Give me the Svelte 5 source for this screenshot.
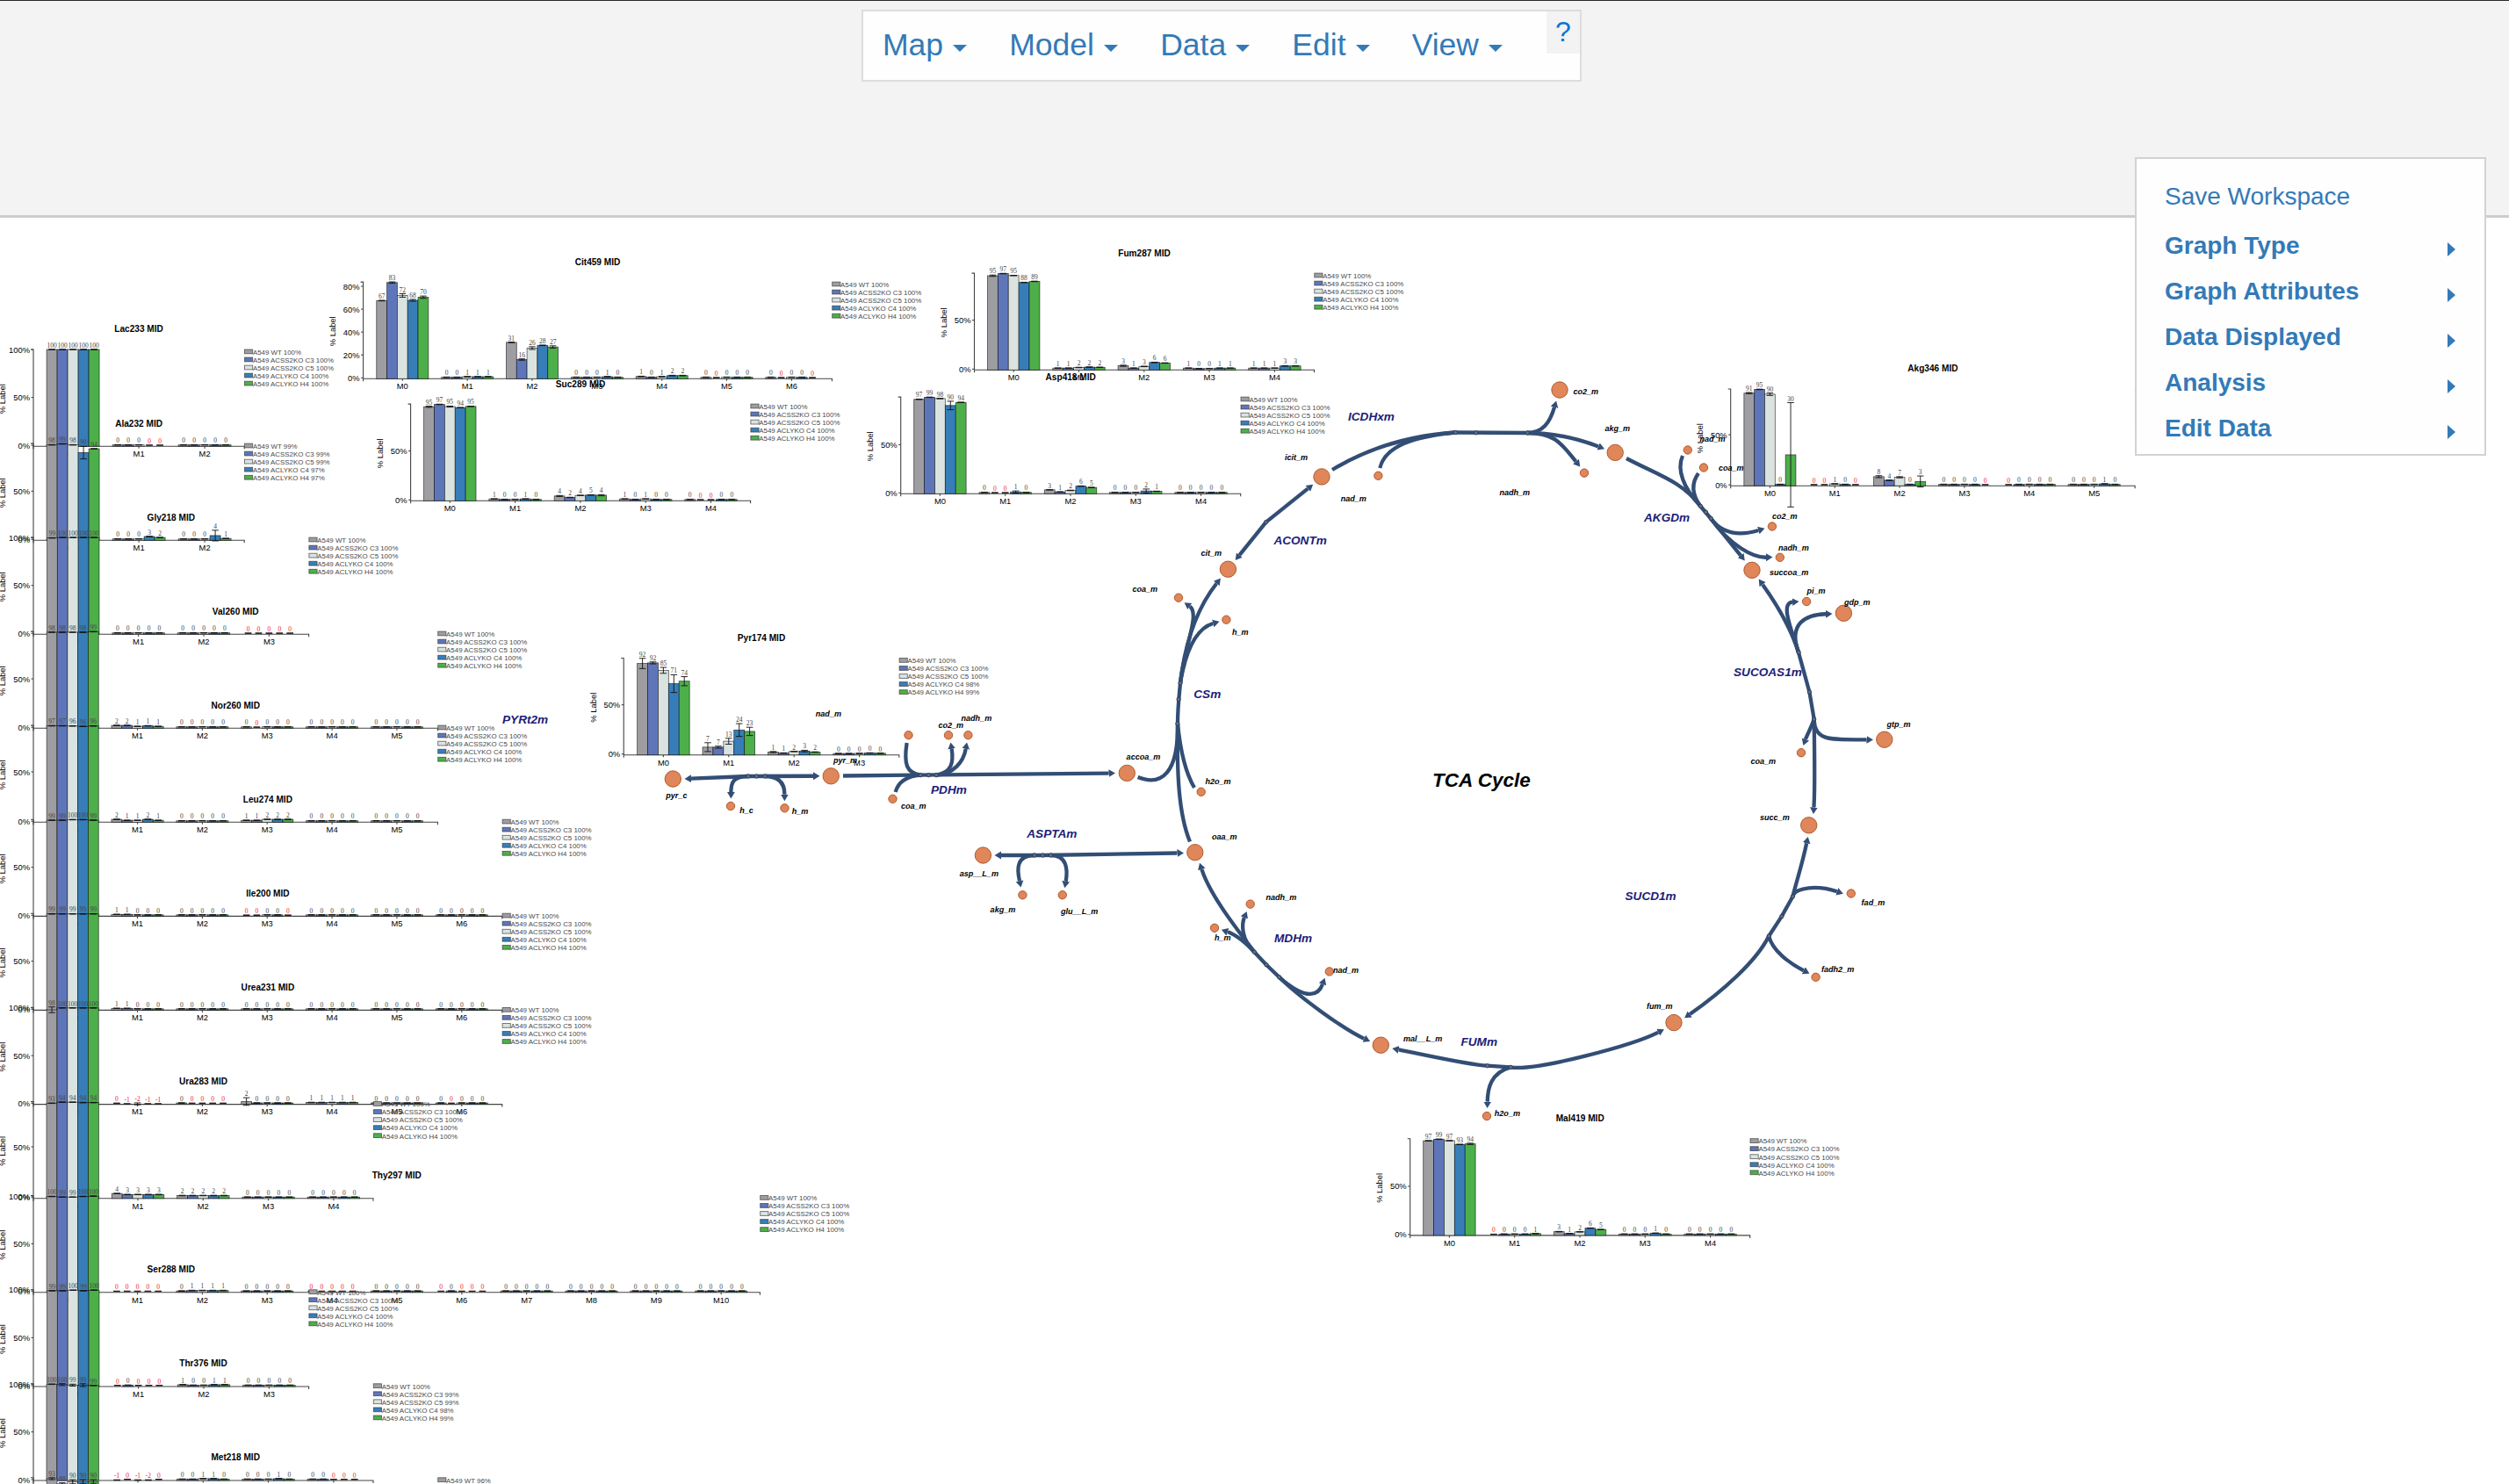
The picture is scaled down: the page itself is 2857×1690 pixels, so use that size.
<script>
  const menus = ['Map', 'Model', 'Data', 'Edit', 'View'];
  const panelItems = ['Graph Type', 'Graph Attributes', 'Data Displayed', 'Analysis', 'Edit Data'];

  const colors = ['#9e9da2', '#5e76b9', '#dae3e0', '#377eb8', '#4daf4a'];
  const samples = ['A549 WT', 'A549 ACSS2KO C3', 'A549 ACSS2KO C5', 'A549 ACLYKO C4', 'A549 ACLYKO H4'];
  const Z = '0 0 0 0 0';
  const R = '0r 0r 0r 0r 0r';
  const full = [100, 100, 100, 100, 100];

  // Group values: "value^error", a trailing r marks a corrected (red) value.
  const source = [
    ['Lac233', 38, 508.2, 100, ['100 100 100 100 100', '0 0 0 0r 0r', Z], full],
    ['Ala232', 38, 615.3, 99.4, ['98 99 98 90^6.5 94', '0 0 0 3 2', '0 0 0 4^5.5 1'], [99, 99, 99, 97, 97]],
    ['Gly218', 38, 722.3, 100, ['99.5 100 100 100 100', Z, Z, R], full],
    ['Val260', 38, 829.3, 98.8, ['98 98 98 98 98.6', '2 2 1 1.6 1', Z, '0 0r 0 0 0', Z, Z], full],
    ['Nor260', 38, 936.3, 97, ['96.6 96.6 96.4 96 96.4', '2 1 1 2 1', Z, '1 1 2 2 2', Z, Z], full],
    ['Leu274', 38, 1043.4, 99.8, ['99 99 99.6 99.6 99', '1 1 0 0 0', Z, '0r 0r 0 0 0r', Z, Z, Z], full],
    ['Ile200', 38, 1150.4, 99.5, ['99 99 99 99 99', '1 1 0 0 0', Z, Z, Z, Z, Z], full],
    ['Urea231', 38, 1257.6, 100.4, ['98^3 100 100 100 100', '0r -1r -2r^1 -1r -1r', '0 0r 0r 0r 0r', '2^4 0 0 0 0', '1 1 1 1 1', Z, '0 0r 0 0 0'], full],
    ['Ura283', 38, 1364.8, 94.5, ['93 94 94 93.6 93.6', '4 3 3 3 3', '2 2 2 2 2', Z, Z], full],
    ['Thy297', 38, 1471.7, 100.6, ['99.6 99 99 99.6 100', R, '0 1 1 1 1', Z, R, Z, '0r 0 0r 0r 0r', Z, Z, Z, Z], full],
    ['Ser288', 38, 1579, 100, ['99 99 99.6 99 99.6', '0r 0 0r 0r 0r', '1 0 0 1 1', Z], full],
    ['Thr376', 38, 1686, 100.5, ['100 99.6^1 99^1 99^1.5 98.6', '-1r 0r -1r -2r 0r', '0 0 1 1 0', '0 0 0 1 0', '0 0 0r 0r 0r'], [100, 99, 99, 98, 99]],
    ['Met218', 38, 1793, 94, ['93^1 88^1 90^2 90^2 90^2', Z, Z, Z, Z, Z], [96, 96, 96, 96, 96]],
    ['Cit459', 413.6, 431.3, 83.8, ['67.5 83.3^.6 72^1.5 67.8^.8 70.5^1', '0 0 1 1 1', '31 16^.6 26^1.2 28.4 27^1', '0 0 0 1 0', '1.2 0 1 2 2', '0 0r 0 0 0', '0 0r 0 0 0r'], full],
    ['Suc289', 467.6, 570.3, 98, ['95.2^.6 97.6 95.4^.5 94.3 95.6', '1 0 0 1 0', '4^.5 2.5 4.6 5 4.8^.6', '1 0 1 0 0', '0 0r 0r 0 0'], full],
    ['Fum287', 1109.5, 421.3, 98, ['95.4^.7 97.6 95.6 88.5 89.6', '1 1 1.6 2 1.8', '3.4^.6 1 2.7 6.8 6.2', '1 0 0 1 1', '1 1 1 3.2 3.2'], full],
    ['Asp418', 1025.7, 562.3, 99.6, ['97.2 99.3 98 90.8^4.4 94', '0 0r 0r 1^1 0', '3.2 1 2.6 7 5.6', '0 0 0 2^2 1.6', Z], full],
    ['Akg346', 1970.7, 553.2, 95.6, ['91.5^.6 95.2 90.4^1.2 0 30^52', '0r 0r 1 0 0r', '8.2^1 4.6 7.6^.6 0 3.4^5.5', '0 0 0 0 0r', '0r 0 0 0 0', '0 0 0 1 0'], full],
    ['Pyr174', 710.2, 859.7, 97.4, ['92^5.2 92.6^1 85^3 71.5^9 74^4.6', '7^4.5 7^1 13^3 24.4^6.5 23^4.2', '2^.6 1 2.6 3^.8 2', '0 0 .6 1 .8'], [100, 100, 100, 98, 99]],
    ['Mal419', 1605.7, 1406.9, 99.4, ['97.2 98.8 97.3 93.4 94^.7', '0r 0 0 0 1', '3 1 2.8 6.6 5.2', '0 0 0 1.4 0', Z], full]
  ];
  // Labels that the rounding of the plotted heights would not give.
  const labelOf = { '99.5': 99, '98.6': 99, '96.6': 97, '96.4': 96, '99.6': 100, '93.6': 94, '1.6': 1, '1.8': 2, '1.2': 1, '1.4': 1, '.6': 0, '.8': 0 };
  const overrides = {
    Cit459: ['67 83 72 68 70', null, '31 16 26 28 27', null, null],
    Suc289: ['95 97 95 94 95', null, '4 2 4 5 4'],
    Fum287: ['95 97 95 88 89', '1 1 2 2 2', '3 1 3 6 6', null, '1 1 1 3 3'],
    Asp418: ['97 99 98 90 94', null, '3 1 2 6 5', '0 0 0 2 1'],
    Akg346: ['91 95 90 0 30', null, '8 4 7 0 3'],
    Pyr174: ['92 92 85 71 74', '7 7 13 24 23', '1 1 2 3 2', '0 0 0 0 0'],
    Mal419: ['97 99 97 93 94', null, '3 1 2 6 5'],
    Thr376: ['100 100 99 99 99'],
    Ser288: ['99 99 100 99 100']
  };

  const H = 109.2;
  const charts = source.map(([name, x, base, max, groups, pct]) => {
    const n = groups.length;
    const w = 20 + 73.4 * n;
    const pitch = n === 3 ? 75 : n === 4 ? 74.4 : n === 5 ? 74.3 : 73.85;
    const c0 = x + (n > 4 ? 44.7 : (w - (n - 1) * pitch) / 2);
    const bw = (pitch * 0.8) / 5;
    const y = (v) => base - 1 - (H * v) / max;
    const ticks = [];
    const step = max < 85 ? 20 : 50;
    for (let t = 0; t <= max + 0.01; t += step) ticks.push({ t, y: y(t) });
    const gs = groups.map((g, gi) => {
      const cx = c0 + gi * pitch;
      const over = overrides[name]?.[gi]?.split(' ');
      const bars = g.split(' ').map((s, i) => {
        const red = s.includes('r');
        const [a, e] = s.replace('r', '').split('^');
        const v = parseFloat(a);
        const pv = v === 0 ? (red ? 0.2 : 0.5) : Math.max(v, -0.4);
        const err = e ? parseFloat(e) : 0.25;
        const bx = cx + (i - 2.5) * bw;
        return {
          x: bx, mid: bx + bw / 2, top: y(pv), h: Math.max(0, base - y(pv)), red,
          e1: y(pv + err), e2: y(pv - err), stem: !!e, color: colors[i],
          label: over ? over[i] : labelOf[a] ?? v
        };
      });
      return { cx, bars, label: 'M' + gi };
    });
    return { name, x, base, top: base - 110.2, w, bw, ticks, gs, pct };
  });

  // Flux edges: cubic or straight segments; b switches the arrowhead on.
  const E = (p, b = 1) => ({ p, b });
  const edges = [
    E([1657, 492.5, 1605, 496, 1560, 509, 1517, 535], 0),
    E([1657, 492.5, 1610, 497, 1577, 508, 1571.3, 533], 0),
    E([1657, 492.5, 1740, 493], 0),
    E([1739, 493, 1770, 493, 1798, 500, 1826.6, 511]),
    E([1739, 493, 1757, 493, 1765, 481, 1772, 457]),
    E([1739, 493, 1772, 493, 1779, 507, 1799, 531]),
    E([1441.6, 594.6, 1494.8, 552]),
    E([1441.6, 594.6, 1407, 637.5]),
    E([1344, 778, 1349, 735, 1362, 694, 1389.6, 659]),
    E([1344, 778, 1348, 738, 1367, 699, 1349, 686.5]),
    E([1344, 778, 1350, 742, 1361, 716, 1388, 708]),
    E([1344, 778, 1343, 790, 1341, 805, 1341, 824], 0),
    E([1341, 824, 1340, 880, 1342, 927, 1355, 958.5], 0),
    E([1341, 824, 1344, 855, 1350, 880, 1360, 897], 0),
    E([1341, 824, 1342, 880, 1323, 896, 1295.6, 885], 0),
    E([1936, 576, 1915, 548, 1888, 541, 1852, 522], 0),
    E([1936, 576, 1917, 556, 1909, 535, 1916, 519], 0),
    E([1936, 576, 1926, 562, 1926, 550, 1934, 539], 0),
    E([1936, 576, 1948.5, 591], 0),
    E([1948.5, 591, 1986.5, 638]),
    E([1948.5, 591, 1964, 611, 1986, 609, 2009, 602]),
    E([1948.5, 591, 1970, 621, 1996, 635, 2018, 634.6]),
    E([2048, 743, 2040, 718, 2026, 692, 2003, 660]),
    E([2048, 743, 2042, 722, 2026, 687, 2048, 685]),
    E([2048, 743, 2036, 710, 2056, 700, 2086, 699]),
    E([2048, 743, 2060.4, 788], 0),
    E([2060.4, 788, 2065.7, 819], 0),
    E([2065.7, 819, 2062, 830, 2058, 836, 2053.6, 848.6]),
    E([2065.7, 819, 2066, 845, 2086, 842, 2132.5, 842.5]),
    E([2065.7, 819, 2066, 850, 2067, 895, 2065, 926.4]),
    E([2041.4, 1021, 2045, 1006, 2052, 985, 2058.6, 953.4]),
    E([2041.4, 1021, 2044, 1010, 2070, 1008, 2098.4, 1017.5]),
    E([2041.4, 1021, 2028.8, 1043.6], 0),
    E([2028.8, 1043.6, 2014.2, 1066], 0),
    E([2014.2, 1066, 2000, 1095, 1960, 1130, 1918.5, 1159]),
    E([2014.2, 1066, 2018, 1082, 2036, 1096, 2060, 1108.5]),
    E([1720, 1215.4, 1750, 1220, 1860, 1190, 1894.5, 1172.4]),
    E([1720, 1215.4, 1693.6, 1213.7], 0),
    E([1693.6, 1213.7, 1675, 1213, 1635, 1204, 1585.8, 1194]),
    E([1720, 1215.4, 1697, 1222, 1694, 1240, 1693.6, 1261.6]),
    E([1428.4, 1084.2, 1410, 1060, 1378, 1020, 1366.2, 983.3]),
    E([1428.4, 1084.2, 1413, 1070, 1414, 1052, 1419.5, 1038.4]),
    E([1428.4, 1084.2, 1415, 1070, 1406, 1064, 1391.3, 1059]),
    E([1428.4, 1084.2, 1442, 1098.7], 0),
    E([1442, 1098.7, 1456.6, 1112.8], 0),
    E([1456.6, 1112.8, 1490, 1142, 1502, 1132, 1508.4, 1114.2]),
    E([1456.6, 1112.8, 1480, 1136, 1530, 1172, 1559.7, 1185.8]),
    E([852, 884, 780, 887]),
    E([852, 884, 933, 883.7]),
    E([852, 884, 836, 884, 832.4, 890, 832.4, 909]),
    E([871, 884, 888, 884, 893.4, 893, 893.4, 911.7]),
    E([960, 883.5, 1269.5, 880.5]),
    E([1048, 882.7, 1032, 880, 1029, 870, 1032.6, 846], 0),
    E([1048, 882.7, 1033, 884, 1023, 890, 1019.7, 902], 0),
    E([1066, 882.7, 1084, 880, 1086, 868, 1082.6, 846]),
    E([1066, 882.7, 1086, 881, 1097, 868, 1101, 846]),
    E([1187, 974, 1133, 974]),
    E([1187, 974, 1347.5, 971.4]),
    E([1178, 974, 1157, 974, 1158, 990, 1162.5, 1010]),
    E([1196.5, 974, 1215, 974, 1216, 990, 1212.5, 1010.7])
  ].map(({ p, b }) => {
    // Pull the end back so the arrowhead's tip lands on the given point.
    const q = [...p];
    if (b) {
      const k = q.length;
      const dx = q[k - 2] - q[k - 4];
      const dy = q[k - 1] - q[k - 3];
      const l = Math.hypot(dx, dy);
      q[k - 2] -= (dx / l) * 7;
      q[k - 1] -= (dy / l) * 7;
    }
    const [x, y, ...rest] = q;
    return { d: `M${x} ${y}${rest.length === 2 ? 'L' : 'C'}${rest.join(' ')}`, arrow: b };
  });

  // [x, y, primary, label, label x, label baseline]
  const nodes = [
    [1776, 444, 1, 'co2_m', 1791.5, 448.6], [1839.2, 515.4, 1, 'akg_m', 1827.5, 491],
    [1505, 542.9, 1, 'icit_m', 1463, 524], [1569.4, 541.8, 0, 'nad_m', 1526.7, 571],
    [1804, 538.6, 0, 'nadh_m', 1707.4, 564], [1398.4, 648.2, 1, 'cit_m', 1367.5, 633],
    [1342, 680.7, 0, 'coa_m', 1289.5, 674], [1396.4, 705.7, 0, 'h_m', 1403, 722.5],
    [1367.7, 901.8, 0, 'h2o_m', 1372.5, 893], [1360.8, 970.7, 1, 'oaa_m', 1380, 956],
    [1921.8, 512.5, 0, 'nad_m', 1935.5, 503], [1940, 532.5, 0, 'coa_m', 1957, 535.5],
    [2017.9, 599.5, 0, 'co2_m', 2018, 591], [2026.8, 634.8, 0, 'nadh_m', 2025, 627],
    [1995, 649.3, 1, 'succoa_m', 2015, 655], [2057.1, 685, 0, 'pi_m', 2057.5, 676],
    [2099.4, 698.3, 1, 'gdp_m', 2100, 689], [2145.8, 842.2, 1, 'gtp_m', 2148.5, 828],
    [2051, 857.2, 0, 'coa_m', 1993.5, 870], [2059.7, 939.8, 1, 'succ_m', 2004, 934],
    [2107.8, 1017.5, 0, 'fad_m', 2119.6, 1031], [2067.6, 1112.8, 0, 'fadh2_m', 2074, 1107],
    [1906, 1164.6, 1, 'fum_m', 1875, 1149], [1572.3, 1190.2, 1, 'mal__L_m', 1598, 1186],
    [1693, 1271, 0, 'h2o_m', 1701.8, 1271], [1423.7, 1029.6, 0, 'nadh_m', 1441.5, 1025],
    [1383, 1056.8, 0, 'h_m', 1383, 1071], [1513.8, 1106.4, 0, 'nad_m', 1518, 1108],
    [766.3, 887, 1, 'pyr_c', 758.3, 909], [946.2, 883.8, 1, 'pyr_m', 949, 869],
    [832, 918, 0, 'h_c', 842.3, 926], [893.5, 920.3, 0, 'h_m', 901.7, 927],
    [1034.5, 837.2, 0, 'nad_m', 928.8, 816], [1080, 837.2, 0, 'co2_m', 1068.4, 829],
    [1102.4, 837.2, 0, 'nadh_m', 1094.5, 821], [1016.5, 909.8, 0, 'coa_m', 1026, 921],
    [1283.3, 880.4, 1, 'accoa_m', 1282.6, 864.6], [1119.4, 974, 1, 'asp__L_m', 1092.7, 998],
    [1164.4, 1019.3, 0, 'akg_m', 1127.6, 1039], [1209.8, 1019.2, 0, 'glu__L_m', 1208, 1041]
  ];
  const joints = [
    [1657.4, 492.5], [1680.8, 492.9], [1739.3, 493], [1441.6, 594.6], [1344, 778], [1342.1, 796.4],
    [1340.9, 824], [1936.4, 576.4], [1942.5, 583.2], [1948.3, 590.4], [2048.2, 742.9], [2060.4, 788],
    [2065.7, 819], [2041.4, 1021], [2028.8, 1043.6], [2014.2, 1066], [1428.4, 1084.2], [1442, 1098.7],
    [1456.6, 1112.8], [1693.6, 1213.7], [1720.2, 1215.4], [852.1, 884], [861.4, 884], [871, 884],
    [1048.2, 882.7], [1057.4, 882.7], [1066.2, 882.7], [1178, 974], [1187.3, 974], [1196.5, 974]
  ];
  const reactions = [
    ['ICDHxm', 1535, 479], ['ACONTm', 1450.4, 620], ['CSm', 1359.3, 795], ['AKGDm', 1872, 594],
    ['SUCOAS1m', 1974, 770], ['SUCD1m', 1850.5, 1025], ['MDHm', 1451, 1073], ['FUMm', 1663.5, 1191],
    ['PDHm', 1060, 904], ['ASPTAm', 1169.3, 954], ['PYRt2m', 572, 824]
  ];
</script>

<div class="app">
  <header>
    <nav>
      {#each menus as m}
        <button class="menu">{m}<span class="caret"></span></button>
      {/each}
      <button class="help">?</button>
    </nav>
  </header>

  <svg class="canvas" viewBox="0 248 2857 1442" width="2857" height="1442">
    <defs>
      <marker id="arrow" markerUnits="userSpaceOnUse" markerWidth="10" markerHeight="12" refX="0" refY="6" orient="auto">
        <path d="M0 1.6 L7.5 6 L0 10.4 Z" class="head" />
      </marker>
    </defs>

    {#each charts as c}
      <g>
        <text class="title" x={c.x + c.w / 2} y={c.top - 19.6}>{c.name} MID</text>
        <text class="ylabel" transform="translate({c.x - 31.6} {c.base - 54}) rotate(-90)">% Label</text>
        <path class="axis" d="M{c.x - 3} {c.top}H{c.x}V{c.base}M{c.x} {c.base + 3}V{c.base}H{c.x + c.w}v3" />
        {#each c.ticks as t}
          <path class="axis" d="M{c.x - 2.5} {t.y}h2.5" />
          <text class="tick end" x={c.x - 4} y={t.y + 3.5}>{t.t}%</text>
        {/each}
        {#each c.gs as g}
          <path class="axis" d="M{g.cx} {c.base}v2.5" />
          <text class="tick" x={g.cx} y={c.base + 11.8}>{g.label}</text>
          {#each g.bars as b}
            {#if !b.red}
              <rect class="bar" x={b.x} y={b.top} width={c.bw} height={b.h} fill={b.color} />
            {/if}
            <path class="err" d="M{b.mid - c.bw * 0.32} {b.e1}h{c.bw * 0.64}M{b.mid - c.bw * 0.32} {b.e2}h{c.bw * 0.64}" />
            {#if b.stem}<path class="err" d="M{b.mid} {b.e1}V{b.e2}" />{/if}
            <text class="val" class:red={b.red} x={b.mid} y={b.e1 - 2}>{b.label}</text>
          {/each}
        {/each}
        {#each samples as s, i}
          <rect class="swatch" x={c.x + c.w + 0.3} y={c.top + i * 9.05} width="9.2" height="4.8" fill={colors[i]} />
          <text class="legend" x={c.x + c.w + 9.7} y={c.top + 5.7 + i * 9.05}>{s} {c.pct[i]}%</text>
        {/each}
      </g>
    {/each}

    {#each edges as e}
      <path class="edge" d={e.d} marker-end={e.arrow ? 'url(#arrow)' : undefined} />
    {/each}
    {#each joints as [x, y]}
      <circle class="joint" cx={x} cy={y} r="2.2" />
    {/each}
    {#each nodes as [x, y, big]}
      <circle class="node" cx={x} cy={y} r={big ? 9.2 : 4.7} />
    {/each}
    {#each nodes as [, , , label, x, y]}
      <text class="met" {x} {y}>{label}</text>
    {/each}
    {#each reactions as [label, x, y]}
      <text class="rxn" {x} {y}>{label}</text>
    {/each}
    <text class="map-title" x="1631" y="896">TCA Cycle</text>
  </svg>

  <aside class="panel">
    <div class="row save">Save Workspace</div>
    {#each panelItems as p}
      <div class="row">{p}<span class="more"></span></div>
    {/each}
  </aside>
</div>

<style>
  :global(body) {
    margin: 0;
    overflow: hidden;
    background: #fff;
  }
  .app {
    position: relative;
    width: 2857px;
    height: 1690px;
    overflow: hidden;
    font-family: 'Liberation Sans', Arial, sans-serif;
  }
  header {
    box-sizing: border-box;
    height: 248px;
    padding: 10px 0 0 981px;
    background: #f3f3f3;
    border-top: 1px solid #2b282c;
    border-bottom: 3px solid #cdcdcd;
  }
  nav {
    box-sizing: border-box;
    display: flex;
    align-items: flex-start;
    width: 820px;
    height: 82px;
    padding-left: 22px;
    border: 2px solid #ddd;
    background: #fefefe;
  }
  button {
    border: 0;
    padding: 0;
    background: none;
    font-family: inherit;
  }
  .menu {
    display: flex;
    align-items: center;
    margin-right: 48.2px;
    height: 77px;
    color: #337ab7;
    font-size: 35.5px;
    line-height: 77px;
  }
  .caret {
    margin: 6px 0 0 11px;
    border: 8px solid transparent;
    border-top-color: #337ab7;
    border-bottom: 0;
  }
  .help {
    width: 38px;
    height: 48px;
    margin-left: auto;
    background: #f3f3f3;
    color: #0275d8;
    font-size: 32px;
    line-height: 46px;
    padding-bottom: 2px;
  }
  .canvas {
    display: block;
  }
  .panel {
    position: absolute;
    left: 2431px;
    top: 179px;
    box-sizing: border-box;
    width: 400px;
    height: 340px;
    padding: 17px 33px 0 32px;
    border: 2px solid #d2d2d2;
    background: #fefefe;
  }
  .row {
    display: flex;
    align-items: center;
    justify-content: space-between;
    height: 52px;
    color: #337ab7;
    font-size: 28px;
    font-weight: bold;
    line-height: 52px;
  }
  .save {
    margin-bottom: 4px;
    font-weight: normal;
  }
  .more {
    margin-top: 7px;
    border: 8px solid transparent;
    border-left: 9.5px solid #337ab7;
    border-right: 0;
  }
  .title {
    font-size: 10.1px;
    font-weight: bold;
    text-anchor: middle;
  }
  .ylabel {
    font-size: 9.4px;
    text-anchor: middle;
  }
  .tick {
    font-size: 9.4px;
    text-anchor: middle;
  }
  .end {
    text-anchor: end;
  }
  .axis {
    fill: none;
    stroke: #444;
    stroke-width: 1.1;
  }
  .bar {
    stroke: #000;
    stroke-opacity: 0.65;
    stroke-width: 0.8;
  }
  .err {
    stroke: #111;
    stroke-width: 0.9;
  }
  .val {
    font-family: 'Liberation Serif', 'Times New Roman', serif;
    font-size: 7.5px;
    fill: #444;
    text-anchor: middle;
  }
  .val.red {
    fill: #f02030;
  }
  .swatch {
    stroke: #333;
    stroke-opacity: 0.7;
    stroke-width: 0.9;
  }
  .legend {
    font-size: 7.9px;
    fill: #484848;
  }
  .edge {
    fill: none;
    stroke: #334e75;
    stroke-width: 4.3;
  }
  .head {
    fill: #334e75;
  }
  .joint {
    fill: #5b6f8d;
    stroke: #2c3440;
    stroke-width: 0.8;
  }
  .node {
    fill: #e0865b;
    stroke: #a8501f;
    stroke-width: 0.9;
  }
  .met {
    font-size: 9.05px;
    font-weight: bold;
    font-style: italic;
  }
  .rxn {
    font-size: 13.6px;
    font-weight: bold;
    font-style: italic;
    fill: #202078;
  }
  .map-title {
    font-size: 22.5px;
    font-weight: bold;
    font-style: italic;
  }
</style>
